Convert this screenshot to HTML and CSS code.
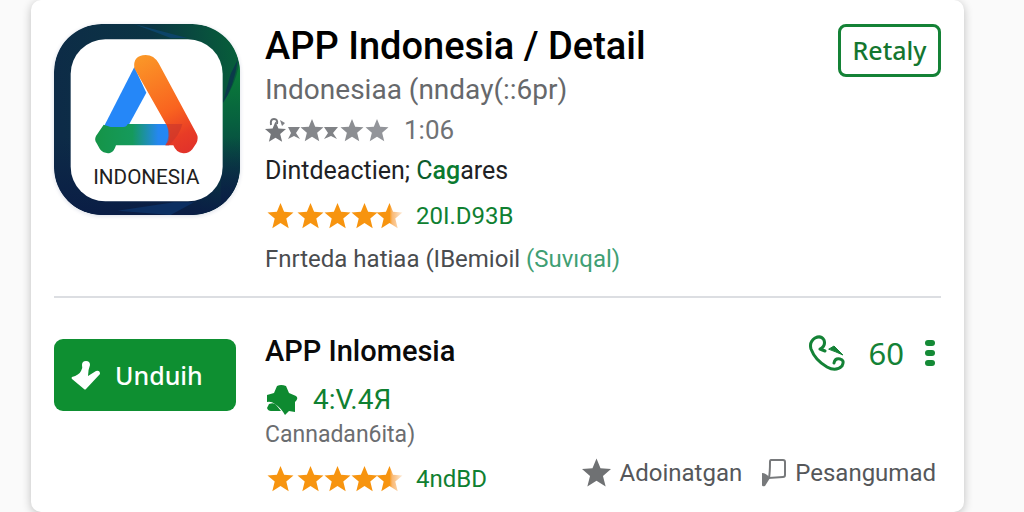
FILE: index.html
```html
<!DOCTYPE html>
<html lang="id">

<head>
  <meta charset="UTF-8">
  <meta name="viewport" content="width=device-width, initial-scale=1">
  <title>APP Indonesia / Detail</title>
  <link rel="stylesheet" href="styles.css">
</head>

<body>
  <!-- Shared shapes -->
  <svg class="sprite" aria-hidden="true">
    <defs>
      <linearGradient id="half-star">
        <stop offset="0.5" stop-color="#f7940f" />
        <stop offset="0.6" stop-color="#f9b872" />
        <stop offset="1" stop-color="#fdebd8" />
      </linearGradient>
    </defs>
    <symbol id="star" viewBox="0 0 26 26">
      <path d="M13 0 L16.6 8.8 L26 9.4 L18.8 15.6 L21.2 25.2 L13 20 L4.8 25.2 L7.2 15.6 L0 9.4 L9.4 8.8 Z" />
    </symbol>
    <symbol id="stars" viewBox="0 0 138 26">
      <use href="#star" x="2" y="0" width="27" height="26" />
      <use href="#star" x="32" y="0" width="27" height="26" />
      <use href="#star" x="59" y="0" width="27" height="26" />
      <use href="#star" x="86" y="0" width="27" height="26" />
      <use href="#star" x="111" y="0" width="27" height="26" fill="url(#half-star)" />
    </symbol>
  </svg>

  <main class="card">
    <section class="app">
      <svg class="app__logo" viewBox="0 0 558 573" role="img" aria-label="APP Indonesia">
        <defs>
          <linearGradient id="frame" x1="0" y1="0.35" x2="1" y2="0.2">
            <stop offset="0" stop-color="#0d2b47" />
            <stop offset="0.55" stop-color="#0b3444" />
            <stop offset="1" stop-color="#075f3a" />
          </linearGradient>
          <linearGradient id="side" x1="0" y1="0" x2="0" y2="1">
            <stop offset="0" stop-color="#0b8238" />
            <stop offset="0.4" stop-color="#07603f" />
            <stop offset="1" stop-color="#0a1f47" />
          </linearGradient>
          <linearGradient id="floor" x1="0" y1="0" x2="0" y2="1">
            <stop offset="0" stop-color="#0a1d45" stop-opacity="0" />
            <stop offset="1" stop-color="#0a1d45" />
          </linearGradient>
          <linearGradient id="leg" gradientUnits="userSpaceOnUse" x1="250" y1="90" x2="400" y2="380">
            <stop offset="0" stop-color="#fb9a28" />
            <stop offset="0.6" stop-color="#f9631f" />
            <stop offset="0.85" stop-color="#e83c26" />
            <stop offset="1" stop-color="#e2332a" />
          </linearGradient>
          <linearGradient id="base" gradientUnits="userSpaceOnUse" x1="124" y1="0" x2="346" y2="0">
            <stop offset="0" stop-color="#159447" />
            <stop offset="0.5" stop-color="#159a5c" />
            <stop offset="0.85" stop-color="#2587f0" />
            <stop offset="1" stop-color="#2387f8" />
          </linearGradient>
          <clipPath id="tile">
            <rect width="558" height="573" rx="140" />
          </clipPath>
        </defs>
        <g clip-path="url(#tile)">
          <rect width="558" height="573" fill="url(#frame)" />
          <path d="M558 110 Q540 200 500 240 V573 H558 Z" fill="url(#side)" />
          <path d="M552 105 Q540 190 505 240 L530 150 Z" fill="#0b3a4a" />
          <rect y="340" width="558" height="233" fill="url(#floor)" />
          <path d="M240 0 L400 42 L350 42 Z" fill="#0c4468" />
          <path d="M190 560 L360 535 L420 535 L350 573 Z" fill="#0c2f62" />
        </g>
        <rect x="50" y="46" width="456" height="486" rx="104" fill="#fff" />
        <path d="M241 129 L277 206 L221 309 H149 Z" fill="#2587f8" />
        <path d="M149 302 L126 336 Q120 348 128 358 L138 376 Q150 390 168 387 Q180 384 186 364 H346 L362 300 H221 Q218 309 208 309 H170 Z" fill="url(#base)" />
        <path d="M275 93 Q300 93 314 118 L427 328 Q435 342 427 358 L415 376 Q404 389 388 388 Q366 386 358 364 H334 Q346 354 346 336 Q348 318 334 297 L241 133 Q236 94 275 93 Z" fill="url(#leg)" />
        <path d="M338 300 H385 Q378 332 345 364 H334 Q350 340 338 300 Z" fill="#c8352b" opacity="0.6" />
        <text class="app__logo-text" x="277" y="481" text-anchor="middle">INDONESIA</text>
      </svg>

      <div class="app__info">
        <h1 class="app__title">APP Indonesia / Detail</h1>
        <p class="app__subtitle">Indonesiaa (nnday(::6pr)</p>
        <p class="app__score">
          <svg class="app__score-stars" viewBox="0 0 124 26" aria-hidden="true">
            <use href="#star" x="0" y="4" width="21" height="22" fill="#74767a" />
            <path d="M6 8 Q5 2 9 2 Q13 2 12 7" fill="none" stroke="#74767a" stroke-width="2" />
            <path d="M15 3 L20 6 L17 9 Z M23 10 H35 L31 16 L35 22 L29 19 L23 22 L26 16 Z M59 10 H73 L68 16 L72 22 L66 19 L59 22 L63 16 Z" fill="#808286" />
            <use href="#star" x="35" y="2" width="24" height="23" fill="#85878b" />
            <use href="#star" x="75" y="2" width="24" height="23" fill="#8c8e92" />
            <use href="#star" x="100" y="2" width="24" height="23" fill="#93959a" />
          </svg>
          <span>1:06</span>
        </p>
        <p class="app__category">Dintdeactien; <span class="app__category-mark">C<b>ag</b></span>ares</p>
        <p class="rating">
          <svg class="rating__stars" aria-hidden="true">
            <use href="#stars" />
          </svg>
          <span>20I.D93B</span>
        </p>
        <p class="app__note">Fnrteda hatiaa (IBemioil <span class="app__note-mark">(Suvıqal)</span></p>
      </div>

      <button class="app__reply" type="button">Retaly</button>
    </section>

    <section class="item">
      <button class="item__download" type="button">
        <svg class="item__download-icon" viewBox="0 0 30 30" aria-hidden="true">
          <path d="M11 5 Q11 1 15 1 Q19 1 19 5 Q17 10 17 16 L25 11 Q29 10 29 14 L15 29 Q14 30 13 29 L1 19 Q0 18 1 17 Q8 15 10 11 Q12 8 11 5 Z" fill="#fff" />
        </svg>
        <span>Unduih</span>
      </button>

      <div class="item__info">
        <h2 class="item__title">APP Inlomesia</h2>
        <p class="item__version">
          <svg class="item__badge" viewBox="0 0 32 32" aria-hidden="true">
            <path d="M11 2 Q15 0 20 2 L23 9 L30 12 Q33 14 29 18 L29 28 L23 27 L19 31 Q15 24 9 20 Q5 17 1 18 V11 L8 9 Z" />
            <path d="M3 20 Q9 18 11 22 L15 27 H5 Q2 27 1 24 Z" />
          </svg>
          <span>4:V.4Я</span>
        </p>
        <p class="item__publisher">Cannadan6ita)</p>
        <p class="rating rating_small">
          <svg class="rating__stars" aria-hidden="true">
            <use href="#stars" />
          </svg>
          <span>4ndBD</span>
        </p>
      </div>

      <div class="item__side">
        <div class="item__contact">
          <button class="icon-button" type="button" aria-label="Telepon">
            <svg width="36" height="36" viewBox="0 0 36 36" fill="none" stroke="#148236" stroke-width="3" stroke-linecap="round" stroke-linejoin="round" aria-hidden="true">
              <path d="M16 16 L11 14 Q17 11 15 5 Q12 0 6 3 Q0 7 2 14 Q6 25 18 32 Q27 37 33 31 Q36 25 31 24 Q26 23 25 28" />
              <path d="M20 14 L25 11 L34 20 L27 17 Z" fill="#148236" stroke-width="1" />
            </svg>
          </button>
          <span class="item__count">60</span>
          <button class="icon-button" type="button" aria-label="Menu">
            <svg width="12" height="28" viewBox="0 0 12 28" fill="#148a36" aria-hidden="true">
              <rect x="1" y="1" width="10" height="6" rx="3" />
              <rect x="1" y="11" width="10" height="6" rx="3" />
              <rect x="1" y="21" width="10" height="6" rx="3" />
            </svg>
          </button>
        </div>
        <div class="item__actions">
          <a class="item__action" href="#">
            <svg width="29" height="30" fill="#6f7173" aria-hidden="true">
              <use href="#star" />
            </svg>
            <span>Adoinatgan</span>
          </a>
          <a class="item__action" href="#">
            <svg width="25" height="30" viewBox="0 0 25 30" aria-hidden="true">
              <path d="M10 2 H22 Q24 2 24 4 V17 Q24 19 22 19 L8 20 Q9 14 9 4 Q9 2 10 2 Z" fill="none" stroke="#77797b" stroke-width="2" />
              <path d="M1 15 Q5 15 9 20 L4 28 Q1 29 1 27 Z" fill="#77797b" />
            </svg>
            <span>Pesangumad</span>
          </a>
        </div>
      </div>
    </section>
  </main>
</body>

</html>
```

FILE: styles.css
```css
* {
  box-sizing: border-box;
}

body {
  margin: 0;
  background-color: #fafafa;
  font-family: Roboto, "Liberation Sans", sans-serif;
  color: #202124;
}

h1,
h2,
p {
  margin: 0;
}

button {
  padding: 0;
  border: none;
  background: none;
  cursor: pointer;
}

.sprite {
  position: absolute;
  width: 0;
  height: 0;
}

.card {
  margin: 0 60px 0 31px;
  padding: 0 23px;
  background-color: #fff;
  border-radius: 10px;
  box-shadow: 0 2px 10px rgba(0, 0, 0, 0.24);
}

.app,
.item {
  display: grid;
  grid-template-columns: 186px 1fr auto;
  column-gap: 25px;
  align-items: start;
}

.app {
  padding: 24px 0 16px;
  border-bottom: 2px solid #dcdee2;
}

.app__logo {
  width: 186px;
  height: 191px;
  border-radius: 48px;
  box-shadow: 0 1px 4px rgba(20, 40, 100, 0.16);
}

.app__logo-text {
  font-size: 62px;
  fill: #202020;
}

.app__title {
  font-size: 38px;
  font-weight: 500;
  line-height: 44px;
  color: #000;
}

.app__subtitle {
  font-size: 28px;
  line-height: 44px;
  color: #66686b;
}

.app__score {
  display: flex;
  align-items: center;
  column-gap: 15px;
  font-size: 26px;
  line-height: 36px;
  color: #707275;
}

.app__score-stars {
  width: 124px;
  height: 26px;
}

.app__category {
  font-size: 25px;
  line-height: 46px;
}

.app__category-mark {
  color: #0a5c2c;
}

.app__category-mark b {
  font-weight: 500;
  color: #0b7a30;
}

.app__note {
  font-size: 24px;
  line-height: 42px;
  color: #4a4c4f;
}

.app__note-mark {
  color: #3f9f74;
}

.app__reply {
  width: 103px;
  height: 53px;
  padding-bottom: 2px;
  border: 3px solid #148236;
  border-radius: 8px;
  font-family: "Noto Sans", sans-serif;
  font-size: 25px;
  font-weight: 500;
  color: #14762f;
}

.rating {
  display: flex;
  align-items: center;
  column-gap: 13px;
  font-size: 24px;
  line-height: 44px;
  color: #0f8031;
}

.rating__stars {
  width: 138px;
  height: 26px;
  fill: #f7940f;
}

.rating_small {
  margin-top: 4px;
}

.item {
  padding: 31px 0 11px;
}

.item__download {
  display: flex;
  align-items: center;
  column-gap: 14px;
  width: 182px;
  height: 72px;
  margin-top: 10px;
  padding: 0 17px;
  background-color: #0e8f31;
  border-radius: 9px;
  font-family: "Noto Sans", sans-serif;
  font-size: 25px;
  font-weight: 500;
  color: #fff;
}

.item__download-icon {
  width: 30px;
  height: 30px;
}

.item__title {
  font-size: 29px;
  font-weight: 500;
  line-height: 44px;
  color: #0a0a0a;
}

.item__version {
  display: flex;
  align-items: center;
  column-gap: 14px;
  margin-top: 10px;
  font-size: 28px;
  line-height: 34px;
  color: #0f8031;
}

.item__badge {
  width: 34px;
  height: 32px;
  fill: #0e8a30;
}

.item__publisher {
  font-size: 23px;
  line-height: 36px;
  color: #6b6d70;
}

.item__side {
  display: flex;
  flex-direction: column;
  justify-content: space-between;
  align-self: stretch;
  align-items: flex-end;
  padding: 2px 5px 10px 0;
}

.item__contact {
  display: flex;
  align-items: center;
  column-gap: 20px;
  height: 44px;
}

.item__count {
  margin-left: 4px;
  font-family: "Noto Sans", sans-serif;
  font-size: 31px;
  line-height: 42px;
  color: #148236;
}

.icon-button {
  display: flex;
}

.item__actions {
  display: flex;
  column-gap: 19px;
}

.item__action {
  display: flex;
  align-items: center;
  column-gap: 9px;
  font-size: 24px;
  line-height: 36px;
  color: #55575a;
  text-decoration: none;
}
```
